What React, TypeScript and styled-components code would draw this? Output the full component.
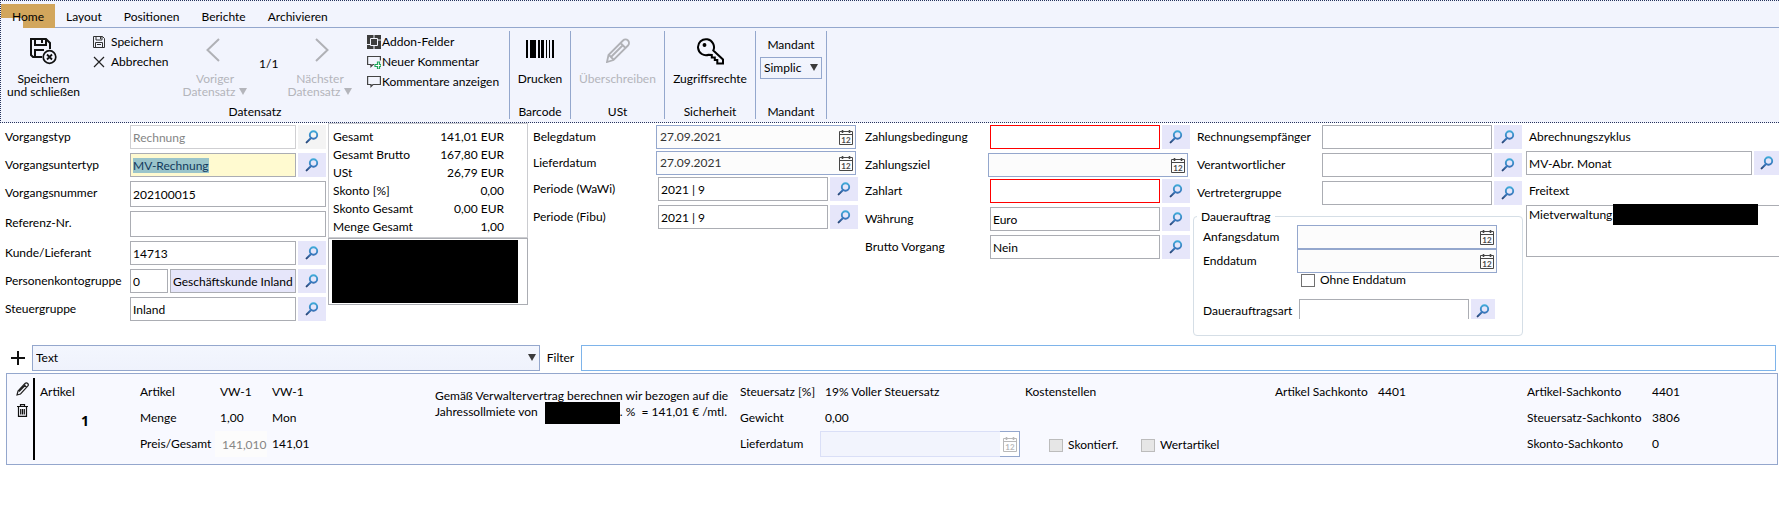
import React, { useEffect, useId, useRef } from 'react';
import styled, { createGlobalStyle, css } from 'styled-components';

const color = {
  ribbon: '#f2f4fd',
  line: '#94a7cd',
  field: '#abadb3',
  lookup: '#e6e6fa',
  muted: '#b4b5bb',
};

const Global = createGlobalStyle`
  *, *::before, *::after { box-sizing: border-box; }
  body { margin: 0; background: #fff; color: #000; font: 12px/16px Lato, "Open Sans", sans-serif; overflow-x: hidden; }
  button, input, select, textarea { font: inherit; color: inherit; margin: 0; border-radius: 0; }
  button { background: none; border: 0; padding: 0; }
  svg { display: block; flex: none; }
`;

/* ---------- Ribbon ---------- */

const Ribbon = styled.header`
  background: ${color.ribbon};
  border: 1px dotted #26335c;
  border-right: 0;
`;

const TabBar = styled.nav`
  display: flex;
  padding-top: 3px;
  border-bottom: 1px solid ${color.line};
`;

const Tab = styled.a<{ $active?: boolean }>`
  padding: 5px 11px 2px;
  height: 23px;
  color: inherit;
  text-decoration: none;
  ${p => p.$active && css`
    margin-bottom: -1px;
    height: 24px;
    background: linear-gradient(${color.ribbon}, ${color.ribbon}) 0 14px / 22px 10px no-repeat #d2a65c;
  `}
`;

const Groups = styled.div`
  display: flex;
  padding: 3px 0;
`;

const Group = styled.section<{ $w: number }>`
  width: ${p => p.$w}px;
  height: 88px;
  display: flex;
  flex-direction: column;
  justify-content: space-between;
  border-right: 1px solid ${color.line};
`;

const GroupTitle = styled.h2`
  margin: 0;
  font: inherit;
  line-height: 15px;
  text-align: center;
`;

const GroupBody = styled.div<{ $start?: boolean }>`
  display: flex;
  justify-content: ${p => (p.$start ? 'flex-start' : 'center')};
  padding-top: 1px;
`;

const BigButton = styled.button<{ $w?: number }>`
  width: ${p => (p.$w ? `${p.$w}px` : 'auto')};
  display: flex;
  flex-direction: column;
  align-items: center;
  line-height: 13px;
  padding-top: 6px;
  white-space: nowrap;
  &:disabled { color: ${color.muted}; }
`;

const IconSlot = styled.span`
  height: 34px;
  display: flex;
  align-items: flex-start;
`;

const WithArrow = styled.span`
  display: inline-flex;
  align-items: center;
  gap: 4px;
`;

const ButtonStack = styled.div<{ $w?: number; $pad: number }>`
  width: ${p => (p.$w ? `${p.$w}px` : 'auto')};
  padding-left: ${p => p.$pad}px;
  display: flex;
  flex-direction: column;
`;

const SmallButton = styled.button<{ $gap?: number }>`
  display: flex;
  align-items: center;
  gap: ${p => p.$gap ?? 1}px;
  height: 20px;
  white-space: nowrap;
`;

const Counter = styled.span`
  width: 29px;
  padding: 24px 0 0 6px;
`;

const MandantBox = styled.div`
  display: flex;
  flex-direction: column;
  align-items: center;
  gap: 4px;
  padding-top: 6px;
`;

const SelectWrap = styled.div<{ $w?: string; $h: number }>`
  position: relative;
  flex: none;
  width: ${p => p.$w};
  height: ${p => p.$h}px;
  select {
    appearance: none;
    width: 100%;
    height: 100%;
    padding: 0 18px 0 3px;
    border: 1px solid ${color.line};
    background: linear-gradient(#f3f6fe, #eff2fc);
    outline: 0;
  }
  svg { position: absolute; right: 4px; top: 50%; margin-top: -4px; pointer-events: none; }
`;

/* ---------- Form ---------- */

const Form = styled.form`
  display: grid;
  grid-template-columns: 328fr 205fr 332fr 328fr 333fr 253fr;
  align-items: start;
`;

const Column = styled.div<{ $pad: string }>`
  min-width: 0;
  padding: ${p => p.$pad};
`;

const FieldRow = styled.div<{ $labelW?: number; $mb?: number; $inset?: number }>`
  display: flex;
  align-items: flex-start;
  gap: 2px;
  margin-bottom: ${p => p.$mb ?? 4}px;
  padding-left: ${p => p.$inset ?? 0}px;
  > label {
    flex: 0 0 ${p => p.$labelW ?? 123}px;
    min-width: 0;
    line-height: 24px;
    white-space: nowrap;
  }
`;

type Tone = 'normal' | 'error' | 'active' | 'disabled' | 'lookup';
const tones = {
  normal: css`border-color: ${color.field};`,
  error: css`border-color: #ff0000;`,
  active: css`background: #fffad0; border-color: ${color.field};`,
  disabled: css`color: #858585; border-color: #cfcfd2;`,
  lookup: css`background: ${color.lookup}; border-color: ${color.field};`,
};

const TextBox = styled.input<{ $tone?: Tone; $h?: number; $w?: number }>`
  flex: ${p => (p.$w ? `0 0 ${p.$w}px` : '1 1 0')};
  min-width: 0;
  width: 0;
  height: ${p => p.$h ?? 24}px;
  padding: 1px 2px 0;
  border: 1px solid;
  background: #fff;
  outline: 0;
  ${p => tones[p.$tone ?? 'normal']}
  &::selection { background: rgba(153, 195, 201, 0.99); color: #123a5c; }
`;

const LookupButton = styled.button<{ $off?: boolean; $w?: number }>`
  flex: 0 0 ${p => p.$w ?? 28}px;
  height: 24px;
  display: flex;
  align-items: center;
  justify-content: center;
  background: ${p => (p.$off ? '#f4f4f4' : color.lookup)};
`;

const DateBox = styled.div<{ $off?: boolean; $h?: number }>`
  flex: 1 1 0;
  min-width: 0;
  display: flex;
  height: ${p => p.$h ?? 24}px;
  background: ${p => (p.$off ? color.ribbon : '#fcfcfc')};
  border: 1px solid ${p => (p.$off ? '#dadff7' : color.line)};
  input { flex: 1; min-width: 0; width: 0; padding: 0 3px; border: 0; background: none; outline: 0; color: #333; }
  button {
    flex: 0 0 18px;
    display: flex;
    align-items: center;
    justify-content: center;
    ${p => p.$off && css`
      flex-basis: 20px;
      margin: -1px;
      background: #fff;
      border: 1px solid ${color.line};
      border-left: 0;
    `}
  }
`;

const DateSlot = styled.div<{ $trim: number }>`
  flex: 1;
  min-width: 0;
  display: flex;
  margin-right: ${p => p.$trim}px;
`;

const Totals = styled.table`
  width: 100%;
  border: 1px solid #cbccd0;
  border-spacing: 0;
  border-collapse: separate;
  padding: 4px 23px 1px 4px;
  th, td { padding: 0; height: 18px; font-weight: normal; text-align: left; white-space: nowrap; }
  td { text-align: right; }
`;

const AddressBox = styled.div`
  height: 67px;
  padding: 1px 9px 1px 3px;
  border: 1px solid ${color.field};
`;

const Redacted = styled.div`
  height: 100%;
  background: #000;
`;

const OrderBox = styled.fieldset`
  min-width: 0;
  margin: 0 3px 0 0;
  padding: 1px 25px 16px 9px;
  border: 1px solid #d5dee6;
  border-radius: 4px;
  legend { padding: 0 4px; margin-left: -6px; line-height: 15px; }
`;

const Clip = styled.div`
  height: 20px;
  margin-top: 12px;
  padding-right: 2px;
  overflow: hidden;
`;

const CheckLabel = styled.label<{ $inset?: number }>`
  display: flex;
  align-items: center;
  gap: 5px;
  height: 14px;
  margin-left: ${p => p.$inset ?? 0}px;
  white-space: nowrap;
`;

const Check = styled.input`
  appearance: none;
  width: 14px;
  height: 13px;
  border: 1px solid #707070;
  background: #fff;
  &:disabled { background: #e6e6e6; border-color: #bcbcbc; }
`;

const TopLabel = styled.label<{ $h: number }>`
  display: block;
  height: ${p => p.$h}px;
  line-height: 24px;
  padding-left: 3px;
`;

const NoteWrap = styled.div`
  position: relative;
  textarea {
    display: block;
    width: 100%;
    height: 52px;
    padding: 1px 2px;
    border: 1px solid ${color.field};
    border-right: 0;
    resize: none;
    outline: 0;
  }
`;

const NoteMask = styled.div`
  position: absolute;
  left: 87px;
  top: -1px;
  right: 21px;
  height: 21px;
  background: #000;
`;

/* ---------- Positions ---------- */

const FilterBar = styled.div`
  display: flex;
  align-items: center;
  padding: 0 3px 0 6px;
  margin: 9px 0 2px;
  > label { flex: 0 0 40px; padding: 0 7px; }
`;

const AddButton = styled.button`
  flex: 0 0 26px;
  height: 26px;
  padding-left: 4px;
`;

const FilterInput = styled.input`
  flex: 1194 1 0;
  min-width: 0;
  width: 0;
  height: 26px;
  border: 1px solid #7eb4ea;
  outline: 0;
`;

const KindSelect = styled(SelectWrap)`
  flex: 510 1 0;
`;

const Position = styled.article`
  display: grid;
  grid-template-columns:
    33px minmax(0, 100fr) minmax(0, 295fr) minmax(0, 305fr) minmax(0, 285fr)
    minmax(0, 250fr) minmax(0, 252fr) minmax(0, 250fr);
  margin: 0 1px 0 6px;
  border: 1px solid ${color.line};
  background: #f8f9ff;
`;

const Tools = styled.div`
  display: flex;
  flex-direction: column;
  align-items: center;
  gap: 8px;
  margin: 4px 5px 4px 0;
  padding: 4px 0 0 4px;
  border-right: 2px solid #000;
`;

const Facts = styled.dl<{ $cols: string }>`
  display: grid;
  grid-template-columns: ${p => p.$cols};
  grid-auto-rows: 26px;
  align-content: start;
  align-items: center;
  min-width: 0;
  margin: 0;
  padding: 5px 0 7px;
  white-space: nowrap;
  dt, dd { margin: 0; }
`;

const Price = styled.dd`
  display: flex;
  align-items: center;
  height: 26px;
  input { width: 52px; height: 26px; border: 0; background: #fcfcfc; color: #858585; padding: 0 0 0 7px; margin-left: -5px; }
`;

const Indented = styled.dd`
  padding-left: 5px;
`;

const Kind = styled.div`
  padding: 10px 10px 0 0;
`;

const Index = styled.div`
  padding-top: 12px;
  text-align: center;
  font: bold 14px/18px "Open Sans", sans-serif;
`;

const Description = styled.p`
  margin: 0;
  padding-top: 14px;
  white-space: nowrap;
`;

const InlineMask = styled.span`
  display: inline-block;
  width: 75px;
  height: 22px;
  margin: -4px 0 -4px 4px;
  vertical-align: middle;
  background: #000;
`;

const Costs = styled.div`
  display: flex;
  flex-direction: column;
  justify-content: space-between;
  padding: 10px 0 12px;
`;

const CheckRow = styled.div`
  display: flex;
  padding-left: 24px;
  > label { flex: 0 0 92px; }
`;

/* ---------- Icons ---------- */

const Lens = () => (
  <svg width="14" height="14" viewBox="0 0 14 14" fill="none">
    <defs>
      <linearGradient id="lens" x1="0" y1="0" x2="0" y2="14" gradientUnits="userSpaceOnUse">
        <stop offset="0" stopColor="#41b0dc" />
        <stop offset="0.6" stopColor="#3a78bd" />
        <stop offset="1" stopColor="#22355f" />
      </linearGradient>
    </defs>
    <circle cx="8.5" cy="5" r="3.7" stroke="url(#lens)" strokeWidth="1.9" />
    <path d="M6 8 1.6 12.4" stroke="url(#lens)" strokeWidth="2" strokeLinecap="round" />
  </svg>
);

const Calendar = ({ off }: { off?: boolean }) => (
  <svg width="16" height="17" viewBox="0 0 16 17" fill="none" stroke={off ? '#b9b9b9' : '#474747'}>
    <path d="M1.5 2.5h13v13h-13zM1.5 5.5h13" />
    <path d="M4.5 1v3M11.5 1v3" strokeWidth="1.6" />
    <text x="8" y="13.5" textAnchor="middle" fontSize="8" fontWeight="bold" stroke="none" fill={off ? '#b9b9b9' : '#474747'}>12</text>
  </svg>
);

const SaveClose = () => (
  <svg width="27" height="27" viewBox="0 0 27 27" fill="none" stroke="#111" strokeWidth="2">
    <path d="M12 19H3L1 17V1h15l4 4v6" />
    <path d="M5 1v6h11V1M12 2v3M5 19v-7h9" />
    <circle cx="19.500" cy="19" r="6.300" strokeWidth="1.700" />
    <path d="m17 16.500 5 5m0-5-5 5" strokeWidth="1.800" />
  </svg>
);

const Save = () => (
  <svg width="12" height="12" viewBox="0 0 12 12" fill="none" stroke="#333">
    <path d="M.5.5h9l2 2v9H.5zM3 .5v3.500h6V.5M2.500 11.500v-5h7v5M7.500 1v2M4 8.500h4" />
  </svg>
);

const Cross = () => (
  <svg width="12" height="12" viewBox="0 0 12 12" stroke="#222" strokeWidth="1.2"><path d="m1 1 10 10M11 1 1 11" /></svg>
);

const Chevron = ({ next }: { next?: boolean }) => (
  <svg width="18" height="24" viewBox="0 0 18 24" fill="none" stroke="#b0b1b6" strokeWidth="2">
    <path d={next ? 'm5 1 11.500 11L5 23' : 'M13 1 1.500 12 13 23'} />
  </svg>
);

const Triangle = ({ fill = '#3c3c3c' }: { fill?: string }) => (
  <svg width="8" height="7" viewBox="0 0 8 7" fill={fill}><path d="M0 0h8L4 7z" /></svg>
);

const Addon = () => (
  <svg width="14" height="14" viewBox="0 0 14 14">
    <path d="M0 0h14v14H0z" fill="#3d3d3d" />
    <path d="M3.500 3.500h7v7h-7zM7 0v3.500M0 9.500h3.500M7 14v-3.500M10.500 5H14" fill="none" stroke="#f2f4fd" />
  </svg>
);

const Bubble = ({ add }: { add?: boolean }) => (
  <svg width="14" height="14" viewBox="0 0 14 14" fill="none" stroke="#444" strokeWidth="1.200">
    <path d={add ? 'M7 9.500H6L4 11.500v-2H.6v-8h12.800v4' : 'M.6 1.500h12.800v8H6L4 11.500v-2H.6z'} />
    {add && <path d="M10.500 7h2v2.500H14v2h-1.500V14h-2v-2.500H8v-2h2.500z" stroke="#1fa55b" fill="#fff" />}
  </svg>
);

const Barcode = () => (
  <svg width="28" height="22" viewBox="0 -2 28 22" fill="#000">
    <path d="M0 0h2v18H0zM4 0h6v18H4zM12 0h2v18h-2zM15 0h3v18h-3zM20 0h1v18h-1zM23 0h1v18h-1zM26 0h2v18h-2z" />
  </svg>
);

const PencilBig = () => (
  <svg width="24" height="25" viewBox="0 0 24 25" fill="none" stroke="#b0b1b6" strokeWidth="1.800">
    <path d="M1 24 2.500 17 17 2.500a3.500 3.500 0 0 1 5 5L7.500 22zM14.500 5l5 5M3 17l5 5M5.500 18.500 17 7" />
  </svg>
);

const KeyIcon = () => (
  <svg width="27" height="27" viewBox="0 0 27 27" fill="none" stroke="#000" strokeWidth="2">
    <path d="M16.300 12.500a8 8 0 1 0-4.500 4.200l3 .3v2.500h3V22h2.500v3.500H26v-4z" />
    <circle cx="7.500" cy="7" r="1.200" fill="#000" strokeWidth="1.500" />
  </svg>
);

const PencilSmall = () => (
  <svg width="13" height="14" viewBox="0 0 13 14" fill="none" stroke="#222" strokeWidth="1.200">
    <path d="m1 13 1-4L9 1.500a1.800 1.800 0 0 1 2.700 2.700L4.500 12zM8 3l2.500 2.500M3 9.500 9.500 3" />
  </svg>
);

const Trash = () => (
  <svg width="11" height="13" viewBox="0 0 11 13" fill="none" stroke="#111" strokeWidth="1.200">
    <path d="M0 2.500h11M3.500 2V.6h4V2M1.500 3v9.300h8V3M3.700 5v5.500M5.500 5v5.500M7.300 5v5.500" />
  </svg>
);

const Plus = () => (
  <svg width="16" height="16" viewBox="0 0 16 16" stroke="#111" strokeWidth="2"><path d="M8 1v14M1 8h14" /></svg>
);

/* ---------- Parts ---------- */

type LookupProps = { label: string; value?: string; tone?: Tone; inset?: number; selected?: boolean };

function LookupField({ label, value, tone, inset, selected }: LookupProps) {
  const id = useId();
  const ref = useRef<HTMLInputElement>(null);
  useEffect(() => {
    if (selected) {
      ref.current?.focus();
      ref.current?.select();
    }
  }, [selected]);
  return (
    <FieldRow $inset={inset}>
      <label htmlFor={id}>{label}</label>
      <TextBox id={id} ref={ref} $tone={tone} defaultValue={value} disabled={tone === 'disabled'} />
      <LookupButton type="button" aria-label={`${label} suchen`} $off={tone === 'disabled'}><Lens /></LookupButton>
    </FieldRow>
  );
}

type DateProps = { label: string; value?: string; labelW?: number; mb?: number; trim?: number };

function DateField({ label, value, labelW = 121, mb = 2, trim = 2 }: DateProps) {
  const id = useId();
  return (
    <FieldRow $labelW={labelW} $mb={mb}>
      <label htmlFor={id}>{label}</label>
      <DateSlot $trim={trim}>
        <DateBox>
          <input id={id} defaultValue={value} />
          <button type="button" aria-label={`${label} wählen`}><Calendar /></button>
        </DateBox>
      </DateSlot>
    </FieldRow>
  );
}

function PlainField({ label, value }: { label: string; value?: string }) {
  const id = useId();
  return (
    <FieldRow>
      <label htmlFor={id}>{label}</label>
      <TextBox id={id} $h={26} defaultValue={value} />
    </FieldRow>
  );
}

const totals = [
  ['Gesamt', '141,01 EUR'],
  ['Gesamt Brutto', '167,80 EUR'],
  ['USt', '26,79 EUR'],
  ['Skonto [%]', '0,00'],
  ['Skonto Gesamt', '0,00 EUR'],
  ['Menge Gesamt', '1,00'],
];

export default function App() {
  return (
    <>
      <Global />
      <Ribbon>
        <TabBar>
          <Tab href="#home" $active>Home</Tab>
          <Tab href="#layout">Layout</Tab>
          <Tab href="#positionen">Positionen</Tab>
          <Tab href="#berichte">Berichte</Tab>
          <Tab href="#archivieren">Archivieren</Tab>
        </TabBar>
        <Groups>
          <Group $w={509}>
            <GroupBody $start>
              <BigButton $w={85}>
                <IconSlot><SaveClose /></IconSlot>
                <span>Speichern</span>
                <span>und schließen</span>
              </BigButton>
              <ButtonStack $w={91} $pad={7}>
                <SmallButton $gap={6}><Save />Speichern</SmallButton>
                <SmallButton $gap={6}><Cross />Abbrechen</SmallButton>
              </ButtonStack>
              <BigButton $w={76} disabled>
                <IconSlot><Chevron /></IconSlot>
                <span>Voriger</span>
                <WithArrow>Datensatz<Triangle fill={color.muted} /></WithArrow>
              </BigButton>
              <Counter>1/1</Counter>
              <BigButton $w={76} disabled>
                <IconSlot><Chevron next /></IconSlot>
                <span>Nächster</span>
                <WithArrow>Datensatz<Triangle fill={color.muted} /></WithArrow>
              </BigButton>
              <ButtonStack $pad={9}>
                <SmallButton><Addon />Addon-Felder</SmallButton>
                <SmallButton><Bubble add />Neuer Kommentar</SmallButton>
                <SmallButton><Bubble />Kommentare anzeigen</SmallButton>
              </ButtonStack>
            </GroupBody>
            <GroupTitle>Datensatz</GroupTitle>
          </Group>
          <Group $w={61}>
            <GroupBody>
              <BigButton><IconSlot><Barcode /></IconSlot>Drucken</BigButton>
            </GroupBody>
            <GroupTitle>Barcode</GroupTitle>
          </Group>
          <Group $w={94}>
            <GroupBody>
              <BigButton disabled><IconSlot><PencilBig /></IconSlot>Überschreiben</BigButton>
            </GroupBody>
            <GroupTitle>USt</GroupTitle>
          </Group>
          <Group $w={91}>
            <GroupBody>
              <BigButton><IconSlot><KeyIcon /></IconSlot>Zugriffsrechte</BigButton>
            </GroupBody>
            <GroupTitle>Sicherheit</GroupTitle>
          </Group>
          <Group $w={71}>
            <MandantBox>
              <label htmlFor="mandant">Mandant</label>
              <SelectWrap $w="62px" $h={22}>
                <select id="mandant"><option>Simplic</option></select>
                <Triangle />
              </SelectWrap>
            </MandantBox>
            <GroupTitle>Mandant</GroupTitle>
          </Group>
        </Groups>
      </Ribbon>

      <Form>
        <Column $pad="2px 2px 0 5px">
          <LookupField label="Vorgangstyp" value="Rechnung" tone="disabled" />
          <LookupField label="Vorgangsuntertyp" value="MV-Rechnung" tone="active" selected />
          <PlainField label="Vorgangsnummer" value="202100015" />
          <PlainField label="Referenz-Nr." />
          <LookupField label="Kunde/Lieferant" value="14713" />
          <FieldRow>
            <label htmlFor="pkg">Personenkontogruppe</label>
            <TextBox id="pkg" $w={38} defaultValue="0" />
            <TextBox aria-label="Bezeichnung der Gruppe" $tone="lookup" readOnly value="Geschäftskunde Inland" />
            <LookupButton type="button" aria-label="Personenkontogruppe suchen"><Lens /></LookupButton>
          </FieldRow>
          <LookupField label="Steuergruppe" value="Inland" />
        </Column>

        <Column $pad="0 5px 0 0">
          <Totals>
            <tbody>
              {totals.map(([name, value]) => (
                <tr key={name}><th scope="row">{name}</th><td>{value}</td></tr>
              ))}
            </tbody>
          </Totals>
          <AddressBox><Redacted /></AddressBox>
        </Column>

        <Column $pad="2px 7px 0 0">
          <DateField label="Belegdatum" value="27.09.2021" />
          <DateField label="Lieferdatum" value="27.09.2021" />
          <LookupField label="Periode (WaWi)" value="2021 | 9" />
          <LookupField label="Periode (Fibu)" value="2021 | 9" />
        </Column>

        <Column $pad="2px 3px 0 0">
          <LookupField label="Zahlungsbedingung" tone="error" />
          <DateField label="Zahlungsziel" />
          <LookupField label="Zahlart" tone="error" />
          <LookupField label="Währung" value="Euro" />
          <LookupField label="Brutto Vorgang" value="Nein" />
        </Column>

        <Column $pad="2px 0 0 0">
          <Column $pad="0 4px 0 4px">
            <LookupField label="Rechnungsempfänger" />
            <LookupField label="Verantwortlicher" />
            <LookupField label="Vertretergruppe" />
          </Column>
          <OrderBox>
            <legend>Dauerauftrag</legend>
            <DateField label="Anfangsdatum" labelW={92} mb={0} trim={0} />
            <DateField label="Enddatum" labelW={92} mb={0} trim={0} />
            <CheckLabel $inset={98}><Check type="checkbox" />Ohne Enddatum</CheckLabel>
            <Clip>
              <FieldRow $labelW={94}>
                <label htmlFor="art">Dauerauftragsart</label>
                <TextBox id="art" />
                <LookupButton type="button" aria-label="Dauerauftragsart suchen" $w={24}><Lens /></LookupButton>
              </FieldRow>
            </Clip>
          </OrderBox>
        </Column>

        <Column $pad="2px 0 0 0">
          <TopLabel htmlFor="zyklus" $h={26}>Abrechnungszyklus</TopLabel>
          <FieldRow>
            <TextBox id="zyklus" defaultValue="MV-Abr. Monat" />
            <LookupButton type="button" aria-label="Abrechnungszyklus suchen" $w={25}><Lens /></LookupButton>
          </FieldRow>
          <TopLabel htmlFor="freitext" $h={26}>Freitext</TopLabel>
          <NoteWrap>
            <textarea id="freitext" defaultValue="Mietverwaltung" />
            <NoteMask />
          </NoteWrap>
        </Column>
      </Form>

      <FilterBar>
        <AddButton aria-label="Position hinzufügen"><Plus /></AddButton>
        <KindSelect $h={26}>
          <select aria-label="Positionsart"><option>Text</option></select>
          <Triangle />
        </KindSelect>
        <label htmlFor="filter">Filter</label>
        <FilterInput id="filter" />
      </FilterBar>

      <Position>
        <Tools>
          <button aria-label="Bearbeiten"><PencilSmall /></button>
          <button aria-label="Löschen"><Trash /></button>
        </Tools>
        <Kind>Artikel<Index>1</Index></Kind>
        <Facts $cols="80px 52px 1fr">
          <dt>Artikel</dt><dd>VW-1</dd><dd>VW-1</dd>
          <dt>Menge</dt><dd>1,00</dd><dd>Mon</dd>
          <dt>Preis/Gesamt</dt><Price><input aria-label="Preis" readOnly value="141,010" /></Price><dd>141,01</dd>
        </Facts>
        <Description>
          Gemäß Verwaltervertrag berechnen wir bezogen auf die<br />
          Jahressollmiete von <InlineMask />. %&nbsp; = 141,01 € /mtl.
        </Description>
        <Facts $cols="80px 1fr">
          <dt>Steuersatz [%]</dt><Indented>19% Voller Steuersatz</Indented>
          <dt>Gewicht</dt><Indented>0,00</Indented>
          <dt><label htmlFor="posdatum">Lieferdatum</label></dt>
          <dd>
            <DateSlot $trim={5}>
              <DateBox $off $h={26}>
                <input id="posdatum" disabled />
                <button disabled aria-label="Lieferdatum wählen"><Calendar off /></button>
              </DateBox>
            </DateSlot>
          </dd>
        </Facts>
        <Costs>
          <span>Kostenstellen</span>
          <CheckRow>
            <CheckLabel><Check type="checkbox" disabled />Skontierf.</CheckLabel>
            <CheckLabel><Check type="checkbox" disabled />Wertartikel</CheckLabel>
          </CheckRow>
        </Costs>
        <Facts $cols="103px 1fr">
          <dt>Artikel Sachkonto</dt><dd>4401</dd>
        </Facts>
        <Facts $cols="125px 1fr">
          <dt>Artikel-Sachkonto</dt><dd>4401</dd>
          <dt>Steuersatz-Sachkonto</dt><dd>3806</dd>
          <dt>Skonto-Sachkonto</dt><dd>0</dd>
        </Facts>
      </Position>
    </>
  );
}
